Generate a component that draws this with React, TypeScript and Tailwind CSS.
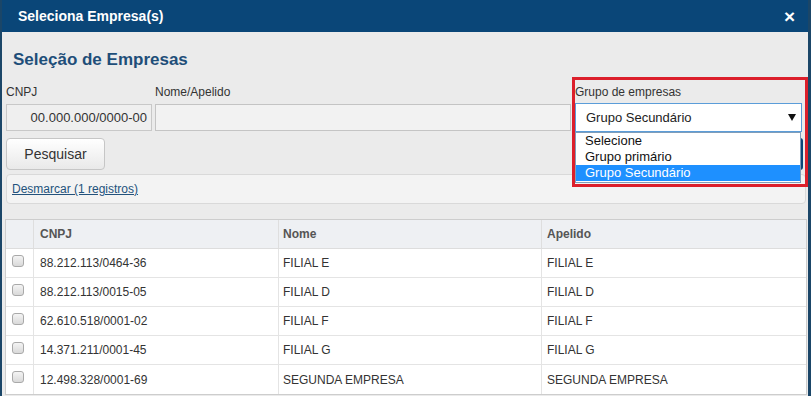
const rows = [
  { cnpj: '88.212.113/0464-36', nome: 'FILIAL E', apelido: 'FILIAL E' },
  { cnpj: '88.212.113/0015-05', nome: 'FILIAL D', apelido: 'FILIAL D' },
  { cnpj: '62.610.518/0001-02', nome: 'FILIAL F', apelido: 'FILIAL F' },
  { cnpj: '14.371.211/0001-45', nome: 'FILIAL G', apelido: 'FILIAL G' },
  { cnpj: '12.498.328/0001-69', nome: 'SEGUNDA EMPRESA', apelido: 'SEGUNDA EMPRESA' },
];

const grupos = ['Selecione', 'Grupo primário', 'Grupo Secundário'];

function Checkbox() {
  return (
    <span className="block w-[12px] h-[12px] rounded-[3px] border border-[#a9a9a9] bg-gradient-to-b from-[#f4f4f4] to-[#d9d9d9]" />
  );
}

function GrupoSelect() {
  return (
    <div className="relative w-[227px]">
      <div className="h-[14px] text-[12px] leading-[14px] text-[#333]">Grupo de empresas</div>
      <div className="mt-[4px] h-[29px] bg-white border border-[#5b9dd9] flex items-center justify-between pl-[10px] pr-[5px] text-[13px] text-[#222]">
        <span>Grupo Secundário</span>
        <svg width="8" height="7" viewBox="0 0 8 7">
          <polygon points="0,0 8,0 4,7" fill="#111" />
        </svg>
      </div>
      {/* lista aberta do select */}
      <div className="absolute left-0 top-full w-[226px] bg-white border border-[#7f9db9] pb-[1px] z-10">
        {grupos.map((g) => (
          <div
            key={g}
            className={
              g === 'Grupo Secundário'
                ? 'h-[16px] leading-[16px] pl-[9px] text-[13px] bg-[#1e90ff] text-white'
                : 'h-[16px] leading-[16px] pl-[9px] text-[13px] text-[#111]'
            }
          >
            {g}
          </div>
        ))}
      </div>
    </div>
  );
}

export default function App() {
  return (
    <div className="w-[811px] h-[396px] overflow-hidden bg-[#1b4668] pl-[2px] font-['Liberation_Sans',Arial,sans-serif]">
      <div className="relative w-[806px] h-[396px] bg-[#ebebeb]">
        <div className="h-[32px] bg-[#0a4678] flex items-center justify-between pl-[16px] pr-[13px]">
          <span className="text-white font-bold text-[14px]">Seleciona Empresa(s)</span>
          <span className="text-white font-bold text-[19px] leading-none">×</span>
        </div>

        <div className="pl-[4px] pr-[2px]">
          <h2 className="mt-[18px] pl-[7px] text-[17px] leading-[20px] font-bold text-[#1e4e79]">
            Seleção de Empresas
          </h2>

          <div className="mt-[15px] flex items-start">
            <div className="w-[146px]">
              <div className="h-[14px] text-[12px] leading-[14px] text-[#333]">CNPJ</div>
              <div className="mt-[5px] h-[27px] bg-[#efefef] border border-[#c8c8c8] flex items-center justify-end pr-[4px] text-[13px] text-[#333]">
                00.000.000/0000-00
              </div>
            </div>
            <div className="w-[416px] ml-[3px]">
              <div className="h-[14px] text-[12px] leading-[14px] text-[#333]">Nome/Apelido</div>
              <div className="mt-[5px] h-[27px] bg-[#f2f2f2] border border-[#c4c4c4]" />
            </div>
            <div className="ml-[4px]">
              <GrupoSelect />
            </div>
          </div>

          <div className="mt-[6px] flex items-start justify-between">
            <button className="w-[99px] h-[32px] rounded-[4px] border border-[#c6c6c6] bg-gradient-to-b from-white to-[#e9e9e9] text-[14px] text-[#333]">
              Pesquisar
            </button>
            <button aria-label="Selecionar" className="w-[100px] h-[32px] mr-[3px] rounded-[3px] bg-[#0a4678]" />
          </div>

          <div className="mt-[4px] h-[30px] rounded-[4px] border border-[#d9d9d9] bg-[#f3f3f3] flex items-center pl-[5px]">
            <a className="text-[12px] text-[#23527c] underline">Desmarcar (1 registros)</a>
          </div>

          <div className="mt-[15px] -ml-[1px] w-[802px] border border-[#cdcdcd] bg-white text-[12px]">
            <div className="h-[29px] grid grid-cols-[27px_245px_263px_1fr] bg-[#eef0f3] border-b border-[#dddddd] font-bold text-[#555]">
              <div />
              <div className="border-l border-[#dedede] flex items-center pl-[6px]">CNPJ</div>
              <div className="border-l border-[#dedede] flex items-center pl-[4px]">Nome</div>
              <div className="border-l border-[#dedede] flex items-center pl-[5px]">Apelido</div>
            </div>
            {rows.map((r, i) => (
              <div
                key={r.cnpj}
                className={
                  i < rows.length - 1
                    ? 'h-[29px] grid grid-cols-[27px_245px_263px_1fr] border-b border-[#e4e4e4] text-[#333]'
                    : 'h-[29px] grid grid-cols-[27px_245px_263px_1fr] text-[#333]'
                }
              >
                <div className="pl-[6px] pt-[6px]">
                  <Checkbox />
                </div>
                <div className="border-l border-[#e4e4e4] flex items-center pl-[6px]">{r.cnpj}</div>
                <div className="border-l border-[#e4e4e4] flex items-center pl-[4px]">{r.nome}</div>
                <div className="border-l border-[#e4e4e4] flex items-center pl-[5px]">{r.apelido}</div>
              </div>
            ))}
          </div>
        </div>

        {/* destaque em vermelho em volta do filtro de grupo */}
        <div className="absolute left-[570px] top-[77px] w-[236px] h-[110px] border-[3px] border-[#dc1f2b] z-20 pointer-events-none" />
      </div>
    </div>
  );
}
